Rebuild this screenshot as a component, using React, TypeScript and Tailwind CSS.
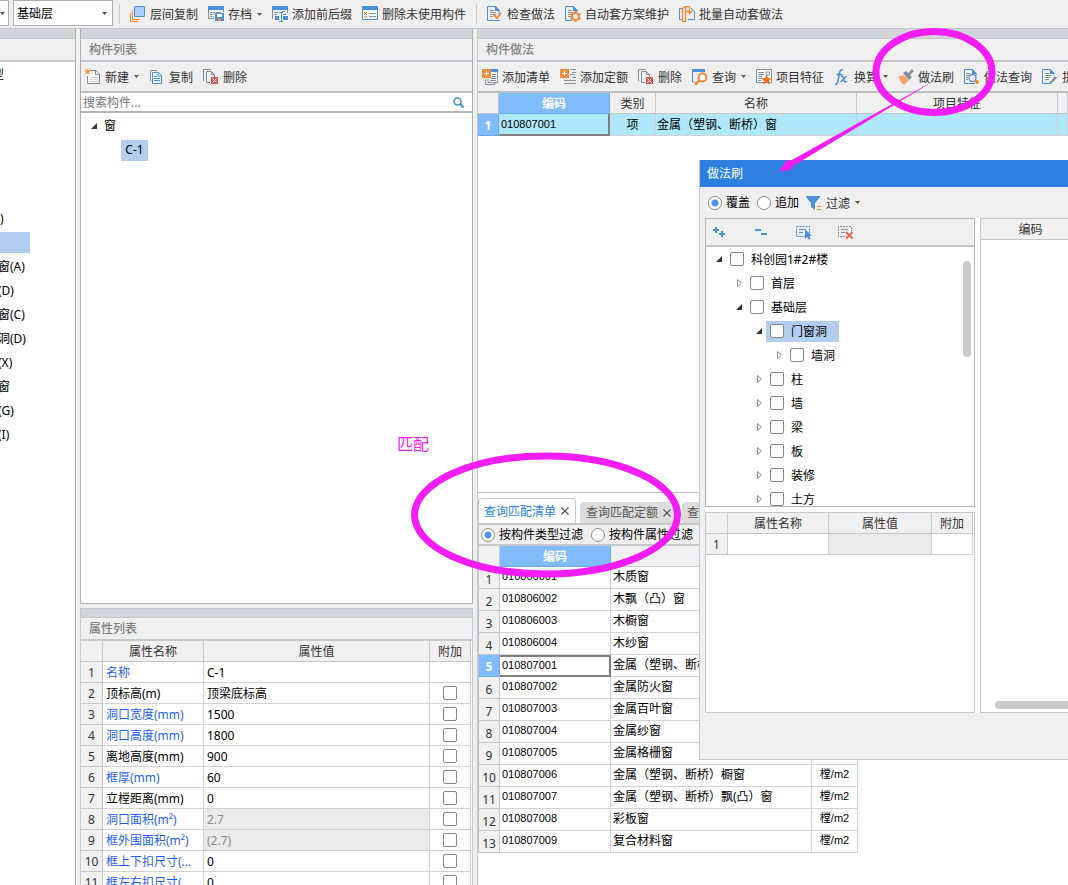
import { useState } from 'react'
import type { ReactNode } from 'react'

const BLUE = '#4a8fdc'
const ORANGE = '#ee8a3a'
const GRAY = '#84909c'

function Svg({ children }: { children: ReactNode }) {
  return (
    <svg width="16" height="16" viewBox="0 0 16 16" fill="none" className="shrink-0" aria-hidden="true">
      {children}
    </svg>
  )
}

function Caret() {
  return (
    <svg width="5" height="3" viewBox="0 0 5 3" className="shrink-0" aria-hidden="true">
      <path d="M0 0h5L2.5 3z" fill="#555" />
    </svg>
  )
}

const LayerCopyIcon = () => (
  <Svg>
    <path d="M.5 7v8.5H8M2.5 4v9.500H10" stroke={ORANGE} />
    <path d="M4.500.500h10v10h-10z" fill="#a9d1fb" stroke={BLUE} />
  </Svg>
)

const ArchiveIcon = () => (
  <Svg>
    <path d="M.5 3v9.500H6M15.500 3v3" stroke={GRAY} />
    <path d="M0 0h16v4H0z" fill={BLUE} />
    <path d="M2 6.500h2M5 6.500h2M8 6.500h5M2 8.500h2M5 8.500h1M2 10.500h2M5 10.500h1" stroke={GRAY} />
    <path d="M7 7h9v8H7z" fill={BLUE} />
    <path d="M9 8h5v3H9z" fill="#fff" />
    <path d="M10 12h3v3h-3z" fill={ORANGE} />
  </Svg>
)

const AffixIcon = () => (
  <Svg>
    <path d="M.5 3v10M15.500 3v4" stroke={GRAY} />
    <path d="M0 0h16v4H0z" fill={BLUE} />
    <path d="M2 6.500h4M2 8.500h3M10 5.500h3M11 8.500h3" stroke={GRAY} />
    <path d="M3 10h4v4H3zM11 10h5v4h-5z" fill={BLUE} />
    <path d="M7 6.500h4M7 15.500h4M9.500 6.500v9" stroke={BLUE} />
  </Svg>
)

const PurgeIcon = () => (
  <Svg>
    <path d="M.5 3v10.500h15V3" fill="#fff" stroke={BLUE} />
    <path d="M0 0h16v4H0z" fill={BLUE} />
    <path d="M2 6.500h1M3 7.500h1M4 6.500h1M2 8.500h1M4 8.500h1M2 10.500h1M3 11.500h1M4 10.500h1" stroke={ORANGE} />
    <path d="M7 7.500h7M7 10.500h7" stroke={GRAY} />
  </Svg>
)

const CheckDocIcon = () => (
  <Svg>
    <path d="M13 14.500H.500V.500h8L12 4v4" stroke={BLUE} />
    <path d="M8 0v5h5z" fill={BLUE} />
    <path d="M3 4.500h4M3 6.500h6M3 8.500h6M3 10.500h3" stroke={GRAY} />
    <path d="M7 9l3 3 4-5" stroke={ORANGE} strokeWidth="2" />
  </Svg>
)

const GearDocIcon = () => (
  <Svg>
    <path d="M7 14.500H.500V.500h8L12 4v2" stroke={BLUE} />
    <path d="M8 0v5h5z" fill={BLUE} />
    <path d="M3 4.500h4M3 6.500h5M3 8.500h3M3 10.500h3" stroke={GRAY} />
    <circle cx="10.500" cy="10.500" r="3.500" stroke={ORANGE} strokeWidth="2" />
    <path d="M10.500 5v2M10.500 14v2M5.500 8l2 1M13.500 12l2 1M5.500 13l2-1M13.500 9l2-1" stroke={ORANGE} strokeWidth="2" />
  </Svg>
)

const BatchIcon = () => (
  <Svg>
    <path d="M3 2.500H.500v11H3M12 2.500l3.500 3v8H9" stroke={BLUE} />
    <path d="M3.500 2.500l3-2v15h-3z" fill="#fff" stroke={ORANGE} strokeWidth="1.500" />
    <path d="M6.500.500h4V7M7.500 4.500l3 3 3-3" stroke={ORANGE} strokeWidth="1.500" />
  </Svg>
)

const NewIcon = () => (
  <Svg>
    <path d="M5 1.500h6l3.500 3.500v9.500h-12V7" stroke={GRAY} fill="#fafafa" />
    <path d="M10.500 1.500v4h4" stroke={GRAY} />
    <path d="M5 8.500h8M5 10.500h8M5 12.500h8" stroke="#d5d9dd" />
    <path d="M0 0l5 5M5 0L0 5M2.500 0v5M0 2.500h5" stroke="#f39a27" />
  </Svg>
)

const CopyIcon = () => (
  <Svg>
    <path d="M1.500 12V1.500H8" stroke={GRAY} />
    <path d="M3.500 3.500h6l3 3v8h-9z" fill="#e9f2fc" stroke={BLUE} />
    <path d="M9 3v4h4" stroke={BLUE} />
    <path d="M5 7.500h3M5 9.500h6M5 11.500h6" stroke={BLUE} />
  </Svg>
)

const DeleteIcon = () => (
  <Svg>
    <path d="M.5 12V.500H8" stroke={GRAY} />
    <path d="M7 13.500H3.500v-11h5l3 3V8M8.500 2.500v3h3" stroke={GRAY} />
    <path d="M8 8h7v7H8z" fill="#d9534f" />
    <path d="M9.500 9.500l4 4M13.500 9.500l-4 4" stroke="#fff" />
  </Svg>
)

const AddListIcon = () => (
  <Svg>
    <path d="M3.500 10v5.500h9.500V14M6 10v3.500h9.500V2M10 5.500h4M10 7.500h4M9 9.500h5M8 11.500h6" stroke={GRAY} />
    <path d="M9 0h7v3H9z" fill={BLUE} />
    <path d="M0 0h9v9H0z" fill={ORANGE} />
    <path d="M2 4.500h5M4.500 2v5" stroke="#fff" />
  </Svg>
)

const AddQuotaIcon = () => (
  <Svg>
    <path d="M10 .500h6M12 3.500h4M10 5.500h5M12 8.500h4M4 11.500h12M4 14.500h12" stroke={GRAY} />
    <path d="M0 0h9v9H0z" fill={ORANGE} />
    <path d="M2 4.500h5M4.500 2v5" stroke="#fff" />
  </Svg>
)

const QueryIcon = () => (
  <Svg>
    <path d="M.5 2v11H3" stroke={BLUE} />
    <path d="M0 0h13v3H0z" fill={BLUE} />
    <circle cx="10.500" cy="8.500" r="4" fill="#fff" stroke={ORANGE} strokeWidth="2" />
    <path d="M7.500 11.500L3 15.500" stroke={ORANGE} strokeWidth="2.500" />
  </Svg>
)

const FeatureIcon = () => (
  <Svg>
    <path d="M.5.500h15v13H.500z" fill="#fff" stroke={GRAY} />
    <path d="M2 3.500h6M2 5.500h6M2 7.500h4M2 9.500h4M2 11.500h3M10 3h3.500v3H10z" stroke={GRAY} />
    <path d="M10.500 5.500l1.500 3.500 4 .3-3 2.500 1 4-3.500-2.200L7 15.800l1-4-3-2.500 4-.3z" fill="#ee7623" />
  </Svg>
)

const FxIcon = () => (
  <Svg>
    <path d="M9 1C7-.5 6 2 5.500 4L4 12c-.5 3-1.500 3.500-3 3M2.500 5.500h6" stroke={BLUE} strokeWidth="1.500" />
    <path d="M7 7.500c2-1 2.500 1 3 3s1 3.500 3 2M13 7.500c-2-1-4 5.500-6.500 5" stroke={BLUE} strokeWidth="1.500" />
  </Svg>
)

const BrushIcon = () => (
  <Svg>
    <path d="M0 8l5-2 6 5-5 5-2-2-1 0-1-3z" fill="#f9a070" />
    <path d="M5 4l3-2 2 2 4-4 2 2-4 4 2 2-3 3z" fill={GRAY} />
  </Svg>
)

const DocSearchIcon = () => (
  <Svg>
    <path d="M11 14.500H.500V.500h8L12 4v3" stroke={BLUE} />
    <path d="M8 0v5h5z" fill={BLUE} />
    <path d="M2 4.500h4M2 6.500h3M2 8.500h2M2 10.500h2" stroke={GRAY} />
    <circle cx="8.500" cy="9" r="3.500" fill="#e9f2fc" stroke="#7186c9" strokeWidth="1.300" />
    <path d="M11 13l2-2 2 2-2 2z" fill="#f39a27" stroke="#f39a27" />
  </Svg>
)

const DocPenIcon = () => (
  <Svg>
    <path d="M8 14.500H.500V.500h8L12 4v2" stroke={BLUE} />
    <path d="M8 0v5h5z" fill={BLUE} />
    <path d="M3 4.500h4M3 6.500h6M3 8.500h5M3 10.500h4" stroke={GRAY} />
    <path d="M8 13l5-6 2 2-5 5z" fill={GRAY} />
    <path d="M7 15l1-3 2 2-1 1z" fill="#35b3c9" />
  </Svg>
)

const FilterIcon = () => (
  <Svg>
    <path d="M0 1h14v1L9 8v7l-4-3V8L0 2z" fill={BLUE} />
    <path d="M11 11.500h4M11 14.500h4" stroke={ORANGE} />
  </Svg>
)

const ExpandIcon = () => (
  <Svg>
    <path d="M1 6h6M4 3v6M7 10h6M10 7v6" stroke={BLUE} strokeWidth="2" />
  </Svg>
)

const CollapseIcon = () => (
  <Svg>
    <path d="M1 6h6M7 10h6" stroke={BLUE} strokeWidth="2" />
  </Svg>
)

const SelectAllIcon = () => (
  <Svg>
    <path d="M.5 2.500h13v10H.500z" stroke={BLUE} strokeDasharray="2 1" />
    <path d="M3 5.500h7M3 8.500h4" stroke={BLUE} />
    <path d="M9 5v10l2.500-2 1.500 3 1.500-1-1-3H16z" fill={BLUE} />
  </Svg>
)

const ClearAllIcon = () => (
  <Svg>
    <path d="M7 12.500H.500v-10h13V7" stroke={GRAY} strokeDasharray="2 1" />
    <path d="M3 5.500h7M3 8.500h4" stroke={GRAY} />
    <path d="M8 8l6.500 6.500M14.500 8L8 14.500" stroke="#de6a52" strokeWidth="2" />
  </Svg>
)

function ToolButton({ icon, label, menu }: { icon: ReactNode; label: string; menu?: boolean }) {
  return (
    <button type="button" className="flex shrink-0 items-center gap-1 whitespace-nowrap text-[#333]">
      {icon}
      <span className="pt-0.5">{label}</span>
      {menu && <span className="pl-px"><Caret /></span>}
    </button>
  )
}

function PanelTitle({ children }: { children?: ReactNode }) {
  return (
    <>
      <div className="h-[10px] shrink-0 border-b border-[#c5c7cd] bg-[#d3d4da]" />
      <h2 className="flex h-[23px] shrink-0 items-center border-b-2 border-[#c5c7cb] bg-[#efefef] px-2 font-medium text-[#808080]">
        {children}
      </h2>
    </>
  )
}

const checkboxClass = 'block size-3.5 shrink-0 appearance-none rounded-[2px] border border-[#868686] bg-white checked:bg-[#4a96ee]'

function Radio({ name, label, checked, onChange }: { name: string; label: string; checked: boolean; onChange: () => void }) {
  return (
    <label className="flex shrink-0 items-center gap-1 whitespace-nowrap text-black">
      <input
        type="radio"
        name={name}
        checked={checked}
        onChange={onChange}
        className="size-3.5 appearance-none rounded-full border border-[#8c8c8c] bg-white checked:bg-[radial-gradient(circle,#4a96ee_3px,#fff_4px)]"
      />
      {label}
    </label>
  )
}

function TreeArrow({ open }: { open: boolean }) {
  return (
    <svg width="8" height="10" viewBox="0 0 8 10" className="shrink-0" aria-hidden="true">
      {open ? <path d="M7 2v6H1z" fill="#333" /> : <path d="M2.500 1.500v7l4-3.500z" fill="#fff" stroke="#8c8c8c" />}
    </svg>
  )
}

const categories = ['型', '', '', '', '', '', ')', '', '窗(A)', '(D)', '窗(C)', '洞(D)', '(X)', '窗', '(G)', '(I)']

function CategoryPanel() {
  return (
    <aside className="flex w-[76px] shrink-0 flex-col overflow-hidden border-r border-[#adadad] bg-white">
      <PanelTitle />
      <ul className="pt-px text-black">
        {categories.map((c, i) => (
          <li
            key={i}
            className={
              i === 0 ? '-ml-2 flex h-6 items-center'
                : i === 6 ? 'flex h-6 items-center'
                  : i === 7 ? 'my-px h-[22px] w-[30px] border-b border-white bg-[#b3cdee]'
                    : '-ml-0.5 flex h-6 items-center'
            }
          >
            {c}
          </li>
        ))}
      </ul>
    </aside>
  )
}

const th = 'border-r border-b border-[#c5c7cb] bg-[#f0f0f0] p-0 pt-0.5 font-normal text-[#333]'
const activeTh = 'border-r border-b border-[#6fa9ea] bg-[#80bbfb] p-0 pt-0.5 font-bold text-white'
const td = 'border-r border-b border-[#d2d2d2] p-0'
const codeFont = "font-['Liberation_Sans','Noto_Sans_CJK_SC',sans-serif] text-[11px]"

type Property = { name: string; value: string; blue?: boolean; readOnly?: boolean; noCheck?: boolean }

const properties: Property[] = [
  { name: '名称', value: 'C-1', blue: true, noCheck: true },
  { name: '顶标高(m)', value: '顶梁底标高' },
  { name: '洞口宽度(mm)', value: '1500', blue: true },
  { name: '洞口高度(mm)', value: '1800', blue: true },
  { name: '离地高度(mm)', value: '900' },
  { name: '框厚(mm)', value: '60', blue: true },
  { name: '立樘距离(mm)', value: '0' },
  { name: '洞口面积(m²)', value: '2.7', blue: true, readOnly: true },
  { name: '框外围面积(m²)', value: '(2.7)', blue: true, readOnly: true },
  { name: '框上下扣尺寸(...', value: '0', blue: true },
  { name: '框左右扣尺寸(...', value: '0', blue: true },
]

function ComponentColumn() {
  return (
    <div className="flex w-[393px] shrink-0 flex-col">
      <section className="flex min-h-0 flex-1 flex-col border-x border-b border-[#adadad] bg-white">
        <PanelTitle>构件列表</PanelTitle>
        <div className="flex h-[31px] shrink-0 items-center gap-[10px] border-b-2 border-[#bcbdc0] bg-[#efefef] pl-1">
          <ToolButton icon={<NewIcon />} label="新建" menu />
          <ToolButton icon={<CopyIcon />} label="复制" />
          <ToolButton icon={<DeleteIcon />} label="删除" />
        </div>
        <div className="flex h-5 shrink-0 items-center border-b-2 border-[#b5b5b5] pr-2">
          <input
            type="text"
            aria-label="搜索构件"
            placeholder="搜索构件..."
            className="h-full min-w-0 flex-1 px-0.5 outline-none placeholder:text-[#777]"
          />
          <svg width="11" height="11" viewBox="0 0 11 11" fill="none" stroke="#3b94c4" aria-hidden="true">
            <circle cx="4.500" cy="4.500" r="3.500" strokeWidth="1.500" />
            <path d="M7 7l3.500 3.500" strokeWidth="2" />
          </svg>
        </div>
        <ul className="text-black">
          <li className="flex h-6 items-center gap-1.5 pt-0.5 pl-[9px]">
            <TreeArrow open />
            窗
          </li>
          <li className="flex h-6 items-center pt-0.5 pl-10">
            <span className="flex h-[21px] w-[27px] items-center justify-center bg-[#b3cdee]">C-1</span>
          </li>
        </ul>
      </section>

      <div className="h-1 shrink-0" />

      <section className="h-[277px] shrink-0 overflow-hidden border border-b-0 border-[#c5c7cd] bg-white">
        <div className="h-[9px] border-b border-[#c5c7cd] bg-[#d3d4da]" />
        <h2 className="flex h-[23px] items-center border-b-2 border-[#c5c7cb] bg-[#efefef] px-2 font-medium text-[#808080]">属性列表</h2>
        <div className="pr-px">
          <table className="w-full table-fixed border-separate border-spacing-0">
            <colgroup>
              <col className="w-[22px]" />
              <col className="w-[101px]" />
              <col />
              <col className="w-[41px]" />
            </colgroup>
            <thead>
              <tr className="h-[21px]">
                <th className={th} />
                <th className={th}>属性名称</th>
                <th className={th}>属性值</th>
                <th className={th}>附加</th>
              </tr>
            </thead>
            <tbody>
              {properties.map((p, i) => (
                <tr key={p.name} className="h-[21px]">
                  <th scope="row" className={th}>{i + 1}</th>
                  <td className={`${td} truncate pt-0.5 pl-[3px] ${p.blue ? 'text-[#1f5ff0]' : 'text-black'}`}>{p.name}</td>
                  <td className={`${td} pt-0.5 pl-[3px] ${p.readOnly ? 'bg-[#eaeaea] text-[#8c8c8c]' : 'text-black'}`}>{p.value}</td>
                  <td className={td}>
                    {!p.noCheck && <input type="checkbox" aria-label={`附加 ${p.name}`} className={`${checkboxClass} mx-auto`} />}
                  </td>
                </tr>
              ))}
            </tbody>
          </table>
        </div>
      </section>
    </div>
  )
}

const items = [
  ['010806001', '木质窗'],
  ['010806002', '木飘（凸）窗'],
  ['010806003', '木橱窗'],
  ['010806004', '木纱窗'],
  ['010807001', '金属（塑钢、断桥）窗'],
  ['010807002', '金属防火窗'],
  ['010807003', '金属百叶窗'],
  ['010807004', '金属纱窗'],
  ['010807005', '金属格栅窗'],
  ['010807006', '金属（塑钢、断桥）橱窗'],
  ['010807007', '金属（塑钢、断桥）飘(凸）窗'],
  ['010807008', '彩板窗'],
  ['010807009', '复合材料窗'],
]

function MethodColumn() {
  const [filter, setFilter] = useState('type')

  return (
    <div className="flex min-w-0 flex-1 flex-col overflow-hidden border-l border-[#c5c7cb] bg-white">
      <section className="flex min-h-0 flex-1 flex-col border-b border-[#bcbdc0]">
        <PanelTitle>构件做法</PanelTitle>
        <div className="flex h-[31px] shrink-0 items-center gap-[10px] overflow-hidden border-b-2 border-[#bcbdc0] bg-[#efefef] pl-1">
          <ToolButton icon={<AddListIcon />} label="添加清单" />
          <ToolButton icon={<AddQuotaIcon />} label="添加定额" />
          <ToolButton icon={<DeleteIcon />} label="删除" />
          <ToolButton icon={<QueryIcon />} label="查询" menu />
          <ToolButton icon={<FeatureIcon />} label="项目特征" />
          <ToolButton icon={<FxIcon />} label="换算" menu />
          <ToolButton icon={<BrushIcon />} label="做法刷" />
          <ToolButton icon={<DocSearchIcon />} label="做法查询" />
          <ToolButton icon={<DocPenIcon />} label="提取做法" />
        </div>
        <table className="w-full table-fixed border-separate border-spacing-0">
          <colgroup>
            <col className="w-[21px]" />
            <col className="w-[111px]" />
            <col className="w-[46px]" />
            <col className="w-[201px]" />
            <col className="w-[201px]" />
            <col />
          </colgroup>
          <thead>
            <tr className="h-[21px]">
              <th className={th} />
              <th className={activeTh}>编码</th>
              <th className={th}>类别</th>
              <th className={th}>名称</th>
              <th className={th}>项目特征</th>
              <th className={th} />
            </tr>
          </thead>
          <tbody className="bg-[#aee8fa] text-black">
            <tr className="h-[22px]">
              <th scope="row" className={activeTh}>1</th>
              <td className={`${codeFont} border-r-2 border-b-2 border-[#808080] p-0 pl-0.5`}>010807001</td>
              <td className={`${td} text-center`}>项</td>
              <td className={`${td} pl-px`}>金属（塑钢、断桥）窗</td>
              <td className={td} />
              <td className={td} />
            </tr>
          </tbody>
        </table>
      </section>

      <section className="h-[392px] shrink-0 overflow-hidden">
        <div className="flex h-8 items-end gap-1 border-b-2 border-[#c5c7cb]">
          <div className="flex h-[25px] w-[98px] shrink-0 items-center gap-1 rounded-t border border-b-0 border-[#c5c7cb] pl-[5px] text-[#2d7fe0]">
            <button type="button" className="pt-0.5">查询匹配清单</button>
            <button type="button" aria-label="关闭 查询匹配清单"><CloseMark /></button>
          </div>
          <div className="flex h-[21px] w-[98px] shrink-0 items-center gap-1 rounded-t bg-[#dcdcdc] pl-[6px] text-[#555]">
            <button type="button">查询匹配定额</button>
            <button type="button" aria-label="关闭 查询匹配定额"><CloseMark /></button>
          </div>
          <div className="flex h-[21px] w-[98px] shrink-0 items-center rounded-t bg-[#dcdcdc] pl-[5px] text-[#555]">
            <button type="button">查</button>
          </div>
        </div>
        <div className="border-l border-[#c5c7cb]">
          <div className="flex h-[21px] items-center gap-2 border-b-2 border-[#c5c7cb] bg-[#efefef] pl-0.5">
            <Radio name="match" label="按构件类型过滤" checked={filter === 'type'} onChange={() => setFilter('type')} />
            <Radio name="match" label="按构件属性过滤" checked={filter === 'prop'} onChange={() => setFilter('prop')} />
          </div>
          <table className="w-[379px] table-fixed border-separate border-spacing-0">
            <colgroup>
              <col className="w-[21px]" />
              <col className="w-[111px]" />
              <col className="w-[201px]" />
              <col className="w-[46px]" />
            </colgroup>
            <thead>
              <tr className="h-[21px]">
                <th className={th} />
                <th className={activeTh}>编码</th>
                <th className={th} />
                <th className={th} />
              </tr>
            </thead>
            <tbody className="text-black">
              {items.map(([code, name], i) => (
                <tr key={code} className="h-[22px]">
                  <th scope="row" className={i === 4 ? activeTh : `${th} pt-1`}>{i + 1}</th>
                  <td className={i === 4 ? `${codeFont} border-2 border-l-0 border-[#808080] p-0 pb-px pl-0.5` : `${codeFont} ${td} pb-0.5 pl-0.5`}>
                    {code}
                  </td>
                  <td className={`${td} whitespace-nowrap pb-0.5 pl-0.5`}>{name}</td>
                  <td className={`${td} ${codeFont} pb-0.5 text-center`}>樘/m2</td>
                </tr>
              ))}
            </tbody>
          </table>
        </div>
      </section>
    </div>
  )
}

function CloseMark() {
  return (
    <svg width="10" height="10" viewBox="0 0 10 10" stroke="#555" strokeWidth="1.200" aria-hidden="true">
      <path d="M1.500 1.500l7 7M8.500 1.500l-7 7" />
    </svg>
  )
}

const indents = ['pl-[9px]', 'pl-[29px]', 'pl-[49px]', 'pl-[69px]']

const floors = [
  { label: '科创园1#2#楼', level: 0, open: true },
  { label: '首层', level: 1 },
  { label: '基础层', level: 1, open: true },
  { label: '门窗洞', level: 2, open: true, selected: true },
  { label: '墙洞', level: 3 },
  { label: '柱', level: 2 },
  { label: '墙', level: 2 },
  { label: '梁', level: 2 },
  { label: '板', level: 2 },
  { label: '装修', level: 2 },
  { label: '土方', level: 2 },
]

function BrushDialog() {
  const [mode, setMode] = useState('cover')

  return (
    <div role="dialog" aria-label="做法刷" className="absolute top-[160px] right-0 left-[699px] flex h-[600px] flex-col overflow-hidden border-b border-l border-[#c3c8d2] bg-[#efefef]">
      <h2 className="flex h-[27px] shrink-0 items-center bg-[#2d7fe0] pl-[7px] text-white">做法刷</h2>
      <div className="flex h-[31px] shrink-0 items-center gap-[7px] pl-2">
        <Radio name="mode" label="覆盖" checked={mode === 'cover'} onChange={() => setMode('cover')} />
        <Radio name="mode" label="追加" checked={mode === 'append'} onChange={() => setMode('append')} />
        <ToolButton icon={<FilterIcon />} label="过滤" menu />
      </div>
      <div className="mb-[46px] ml-[5px] flex min-h-0 flex-1 gap-[5px] bg-white">
        <div className="flex w-[270px] shrink-0 flex-col gap-[5px]">
          <div className="flex h-[289px] flex-col border border-[#b5b5b5]">
            <div className="flex h-7 shrink-0 items-center gap-[26px] border-b-2 border-[#c5c7cb] bg-[#efefef] pl-1.5">
              <button type="button" aria-label="展开"><ExpandIcon /></button>
              <button type="button" aria-label="折叠"><CollapseIcon /></button>
              <button type="button" aria-label="全选"><SelectAllIcon /></button>
              <button type="button" aria-label="清空"><ClearAllIcon /></button>
            </div>
            <div className="flex min-h-0 flex-1 overflow-hidden pr-[3px]">
              <ul className="flex-1 text-black">
                {floors.map((f) => (
                  <li key={f.label} className={`flex h-6 items-center gap-[3px] ${indents[f.level]}`}>
                    <TreeArrow open={!!f.open} />
                    <label className={`flex h-[21px] items-center gap-[7px] whitespace-nowrap pr-3 pl-1 ${f.selected ? 'bg-[#b3cdee]' : ''}`}>
                      <input type="checkbox" className={checkboxClass} />
                      <span className="pt-0.5">{f.label}</span>
                    </label>
                  </li>
                ))}
              </ul>
              <div className="mt-3.5 h-24 w-2 rounded-full bg-[#cacaca]" />
            </div>
          </div>
          <div className="min-h-0 flex-1 border border-[#c5c7cb] pr-px">
            <table className="w-full table-fixed border-separate border-spacing-0">
              <colgroup>
                <col className="w-[22px]" />
                <col className="w-[101px]" />
                <col />
                <col className="w-[41px]" />
              </colgroup>
              <thead>
                <tr className="h-[21px]">
                  <th className={th} />
                  <th className={th}>属性名称</th>
                  <th className={th}>属性值</th>
                  <th className={th}>附加</th>
                </tr>
              </thead>
              <tbody>
                <tr className="h-[21px]">
                  <th scope="row" className={th}>1</th>
                  <td className={td} />
                  <td className={`${td} bg-[#eaeaea]`} />
                  <td className={td} />
                </tr>
              </tbody>
            </table>
          </div>
        </div>
        <div className="flex min-w-0 flex-1 flex-col justify-between overflow-hidden border border-r-0 border-[#c5c7cb]">
          <table className="w-full min-w-[100px] table-fixed border-separate border-spacing-0">
            <thead>
              <tr className="h-[21px]">
                <th className={th}>编码</th>
              </tr>
            </thead>
          </table>
          <div className="mb-[3px] ml-3.5 h-2 rounded-l-full bg-[#cacaca]" />
        </div>
      </div>
    </div>
  )
}

function Annotations() {
  return (
    <div className="pointer-events-none absolute inset-0">
      <svg width="1068" height="885" viewBox="0 0 1068 885" fill="none" aria-hidden="true">
        <ellipse cx="934" cy="72" rx="58" ry="40.500" stroke="#f41df4" strokeWidth="7" />
        <ellipse cx="546" cy="515" rx="131.500" ry="59" stroke="#f41df4" strokeWidth="7" />
        <path d="M937 79L791 160.500l-4-.5-8 11.500 12-1.500 2-4z" fill="#f41df4" />
      </svg>
      <p className="absolute top-[432px] left-[397px] text-base text-[#f41df4]">匹配</p>
    </div>
  )
}

function Separator() {
  return <div className="h-5 w-px shrink-0 bg-[#c8c8c8]" />
}

export default function App() {
  return (
    <div className="relative flex h-screen flex-col overflow-hidden bg-[#efefef] font-['Noto_Sans','Noto_Sans_CJK_SC',sans-serif] text-xs">
      <header className="flex h-[29px] shrink-0 items-center gap-[10px] overflow-hidden border-b border-[#c5c7cd]">
        <div className="-mr-[6px] flex w-[9px] shrink-0 items-center self-start">
          <select aria-label="项目" className="h-[26px] w-full appearance-none border border-l-0 border-[#adadad] bg-white" />
          <span className="-ml-[9px]"><Caret /></span>
        </div>
        <div className="flex w-[100px] shrink-0 items-center self-start">
          <select aria-label="楼层" className="h-[26px] w-full appearance-none border border-[#adadad] bg-white pt-0.5 pl-[3px] text-black">
            <option>基础层</option>
          </select>
          <span className="-ml-[11px]"><Caret /></span>
        </div>
        <div className="-ml-[4px]"><Separator /></div>
        <ToolButton icon={<LayerCopyIcon />} label="层间复制" />
        <ToolButton icon={<ArchiveIcon />} label="存档" menu />
        <ToolButton icon={<AffixIcon />} label="添加前后缀" />
        <ToolButton icon={<PurgeIcon />} label="删除未使用构件" />
        <Separator />
        <ToolButton icon={<CheckDocIcon />} label="检查做法" />
        <ToolButton icon={<GearDocIcon />} label="自动套方案维护" />
        <ToolButton icon={<BatchIcon />} label="批量自动套做法" />
      </header>
      <main className="flex min-h-0 flex-1 gap-1">
        <CategoryPanel />
        <ComponentColumn />
        <MethodColumn />
      </main>
      <BrushDialog />
      <Annotations />
    </div>
  )
}
